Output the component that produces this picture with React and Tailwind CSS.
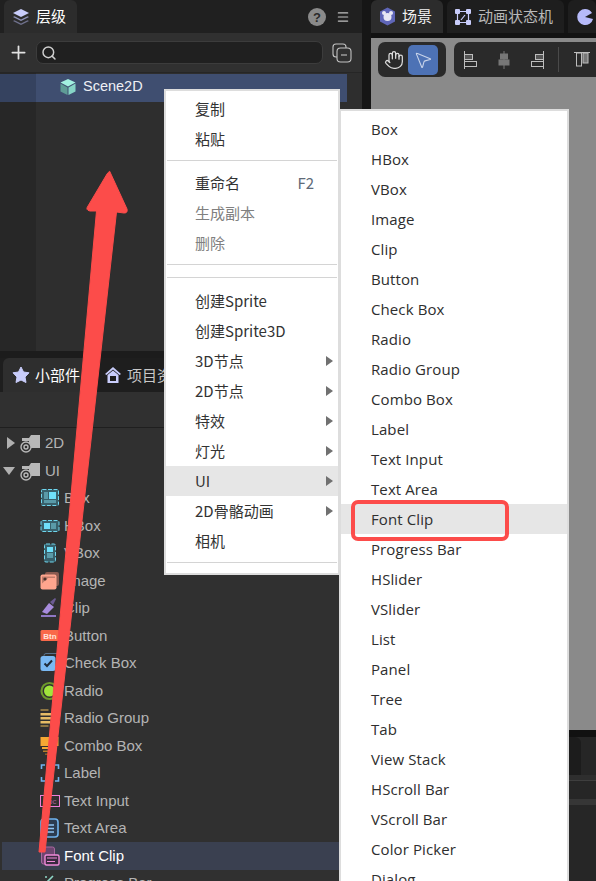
import { Plus, Search, Menu, Hand, MousePointer2 } from 'lucide-react';

const mainMenu = [
  { label: '复制' },
  { label: '粘贴' },
  { sep: true },
  { label: '重命名', hint: 'F2' },
  { label: '生成副本', disabled: true },
  { label: '删除', disabled: true },
  { sep: true },
  { sep: true, tight: true },
  { label: '创建Sprite' },
  { label: '创建Sprite3D' },
  { label: '3D节点', arrow: true },
  { label: '2D节点', arrow: true },
  { label: '特效', arrow: true },
  { label: '灯光', arrow: true },
  { label: 'UI', arrow: true, active: true },
  { label: '2D骨骼动画', arrow: true },
  { label: '相机' },
  { sep: true },
];

const subMenu = ['Box', 'HBox', 'VBox', 'Image', 'Clip', 'Button', 'Check Box', 'Radio', 'Radio Group', 'Combo Box', 'Label', 'Text Input', 'Text Area', 'Font Clip', 'Progress Bar', 'HSlider', 'VSlider', 'List', 'Panel', 'Tree', 'Tab', 'View Stack', 'HScroll Bar', 'VScroll Bar', 'Color Picker', 'Dialog'];

const widgets = ['Box', 'HBox', 'VBox', 'Image', 'Clip', 'Button', 'Check Box', 'Radio', 'Radio Group', 'Combo Box', 'Label', 'Text Input', 'Text Area', 'Font Clip', 'Progress Bar'];

function WidgetIcon({ name }) {
  return (
    <svg width="20" height="20" viewBox="0 0 20 20">
      {name === 'Box' && <g><rect x="1.500" y="1.500" width="17" height="16" rx="1" fill="#38606b" stroke="#6fd6ee" strokeDasharray="4 1.500" /><rect x="9" y="4" width="7" height="7" fill="#6fe0fa" /><rect x="4" y="4" width="4" height="7" fill="#5a9aa8" /><rect x="4" y="12" width="12" height="3" fill="#5a9aa8" /></g>}
      {name === 'HBox' && <g><rect x="1" y="4.500" width="18" height="11" rx="1.500" fill="#38606b" stroke="#6fd6ee" strokeDasharray="4 1.500" /><rect x="4" y="7" width="6" height="6" fill="#6fe0fa" /><rect x="11" y="7" width="5" height="6" fill="#5a9aa8" /></g>}
      {name === 'VBox' && <g><rect x="4.500" y="1" width="11" height="18" rx="1.500" fill="#38606b" stroke="#6fd6ee" strokeDasharray="4 1.500" /><rect x="7" y="4" width="6" height="5" fill="#6fe0fa" /><rect x="7" y="10" width="6" height="5" fill="#5a9aa8" /></g>}
      {name === 'Image' && <g><rect x="5" y="1" width="14" height="14" rx="2" fill="#8a5a50" /><rect x="0.500" y="3.500" width="16" height="15" rx="2" fill="#ffa58e" /><circle cx="5" cy="8" r="1.600" fill="#4a332e" /><path d="M2 12.500 L8 7 H15 V5.500 H2Z" fill="#4a332e" opacity="0.35" /></g>}
      {name === 'Clip' && <g><path d="M2 14 L9 5 L14 9 L7 16Z" fill="#a78bdc" /><path d="M10 4 L15 0 L16 1 L13 7Z" fill="#6b5a92" /><rect x="1" y="17" width="15" height="2" fill="#8f78c4" /></g>}
      {name === 'Button' && <g><rect x="0.500" y="4" width="19" height="11" rx="1.500" fill="#f9694a" /><text x="10" y="12.500" fontSize="8" fontWeight="700" textAnchor="middle" fill="#ffe4dc" fontFamily="Liberation Sans">Btn</text></g>}
      {name === 'Check Box' && <g><rect x="4" y="0.500" width="15" height="13" rx="2" fill="none" stroke="#58728c" /><rect x="0.500" y="3" width="15" height="15" rx="2.500" fill="#7ab9f3" /><path d="M4.500 10.500 L7 13 L12 7.500" fill="none" stroke="#1f2c3a" strokeWidth="2" /></g>}
      {name === 'Radio' && <g><circle cx="9.500" cy="10" r="8" fill="none" stroke="#6d9a2c" strokeWidth="2.200" /><circle cx="9.500" cy="10" r="5.500" fill="#a0e53c" /></g>}
      {name === 'Radio Group' && <g fill="#e8bd66"><rect x="0.500" y="1" width="8" height="2" fill="#8c7442" /><rect x="0.500" y="5" width="13" height="2.500" /><rect x="0.500" y="9" width="13" height="2.500" /><rect x="0.500" y="13" width="10" height="2.500" /><rect x="0.500" y="17" width="8" height="2" fill="#8c7442" /></g>}
      {name === 'Combo Box' && <g><rect x="0.500" y="1" width="18" height="9" fill="#f5a833" /><rect x="2" y="11" width="15" height="2" fill="#f5a833" /><rect x="3" y="14.500" width="13" height="1.500" fill="#b87f2a" /><rect x="5" y="17.500" width="9" height="1.500" fill="#8a6424" /></g>}
      {name === 'Label' && <path d="M5 2 H1.500 V6 M15 2 H18.500 V6 M1.500 14 V18 H5 M18.500 14 V18 H15" fill="none" stroke="#6fb3ef" strokeWidth="1.600" />}
      {name === 'Text Input' && <g><rect x="0.500" y="4.500" width="19" height="11" fill="none" stroke="#ef7fd6" strokeWidth="1" /><text x="10" y="13" fontSize="8" textAnchor="middle" fill="#a85c98" fontFamily="Liberation Sans">abc</text></g>}
      {name === 'Text Area' && <g><rect x="1" y="1" width="17" height="18" rx="3" fill="#2c3c50" stroke="#6fb3ef" strokeWidth="1.600" /><path d="M5 7 H14 M5 10.500 H14 M5 14 H14" stroke="#8fc3f2" strokeWidth="1.500" /></g>}
      {name === 'Font Clip' && <g><rect x="1.500" y="1" width="13" height="17" rx="2" fill="#6e4570" stroke="#a868a0" /><rect x="5" y="9" width="14" height="10" rx="1.500" fill="#3a2a40" stroke="#f08ad8" strokeWidth="1.400" /><path d="M7 12 H17 M7 15.500 H15" stroke="#f08ad8" strokeWidth="1.200" /></g>}
      {name === 'Progress Bar' && <path d="M4 12 L13 3 M5 4 h2 M11 11 h2" stroke="#8fd8c8" strokeWidth="1.600" fill="none" />}
    </svg>
  );
}

function FolderIcon() {
  return (
    <svg width="22" height="20" viewBox="0 0 22 20">
      <path d="M2 5 H9 L11 2 H20 V15 H9 V8 H2Z" fill="#b8b8b8" />
      <circle cx="6" cy="14" r="5" fill="#303030" stroke="#b8b8b8" strokeWidth="1.400" />
      <circle cx="6" cy="14" r="2" fill="none" stroke="#b8b8b8" strokeWidth="1.400" />
    </svg>
  );
}

function LayersIcon() {
  return (
    <svg width="18" height="18" viewBox="0 0 18 18">
      <path d="M9 1 L17 5 L9 9 L1 5Z" fill="#c9cdfb" />
      <path d="M2.500 8.200 L9 11.500 L15.500 8.200 L17 9 L9 13 L1 9Z" fill="#8f92b8" />
      <path d="M2.500 12.200 L9 15.500 L15.500 12.200 L17 13 L9 17 L1 13Z" fill="#70728e" />
    </svg>
  );
}

function AlignIcon({ kind }) {
  return (
    <svg width="16" height="20" viewBox="0 0 16 20" fill="none" stroke="#bdbdbd" strokeWidth="1">
      {kind === 'left' && <g><path d="M1.500 1 V19" /><rect x="1.500" y="4.500" width="8" height="5" fill="#555" /><rect x="1.500" y="11.500" width="12" height="5" /></g>}
      {kind === 'center' && <g><path d="M8 1 V19" stroke="#777" /><rect x="4.500" y="4" width="7" height="5" fill="#777" stroke="#777" /><rect x="3" y="10" width="10" height="5" fill="#777" stroke="#777" /></g>}
      {kind === 'right' && <g><path d="M14.500 1 V19" /><rect x="6.500" y="4.500" width="8" height="5" fill="#555" /><rect x="2.500" y="11.500" width="12" height="5" /></g>}
      {kind === 'top' && <g><path d="M0 2.500 H16" /><rect x="2.500" y="3" width="5" height="13" /><rect x="9" y="3" width="5" height="10" fill="#777" /></g>}
    </svg>
  );
}

function ContextMenu() {
  return (
    <div className="absolute left-[164px] top-[89px] w-[176px] h-[486px] bg-white border-2 border-[#dddddd] pt-[3px] text-[15px] text-[#333333]">
      {mainMenu.map((item, i) => {
        if (item.sep) return <div key={i} className={item.tight ? 'mt-[12px] mb-[8px] mx-[1px] h-[1px] bg-[#d4d4d4]' : 'mt-[6px] mb-[7px] mx-[1px] h-[1px] bg-[#d4d4d4]'} />;
        return (
          <div key={i} className={`h-[30px] flex items-center pl-[29px] pr-[5px] ${item.active ? 'bg-[#e6e6e6]' : ''} ${item.disabled ? 'text-[#808080]' : ''}`}>
            <span className="flex-1">{item.label}</span>
            {item.hint && <span className="text-[#606a78] mr-[19px]">{item.hint}</span>}
            {item.arrow && <span className="w-0 h-0 border-y-[5px] border-y-transparent border-l-[7px] border-l-[#707070]" />}
          </div>
        );
      })}
    </div>
  );
}

function SubMenu() {
  return (
    <div className="absolute left-[339px] top-[109px] w-[230px] h-[790px] bg-white border-2 border-[#dddddd] pt-[3px] text-[15px] tracking-[0.1px] text-[#2e2e2e] font-['Open_Sans','Noto_Sans_CJK_SC',sans-serif] overflow-hidden">
      {subMenu.map((label) => (
        <div key={label} className={`h-[30px] flex items-center pl-[30px] ${label === 'Font Clip' ? 'bg-[#e6e6e6]' : ''}`}>
          {label}
        </div>
      ))}
      <div className="absolute left-[10px] top-[389px] w-[158px] h-[41px] border-4 border-[#fc4c4a] rounded-[7px]" />
    </div>
  );
}

export default function App() {
  return (
    <div className="relative w-[596px] h-[881px] overflow-hidden flex bg-[#171717] font-['Noto_Sans_CJK_SC','Liberation_Sans',sans-serif]">
      <div className="w-[362px] h-full flex flex-col shrink-0">
        {/* hierarchy panel */}
        <div className="h-[351px] flex flex-col bg-[#2e2e2e]">
          <div className="h-[33px] bg-[#202020] flex items-end pl-[4px] pr-[12px]">
            <div className="h-[33px] w-[73px] bg-[#2c2c2c] rounded-t-[6px] flex items-center pl-[8px] gap-[6px] text-white text-[15px]">
              <LayersIcon />
              <span>层级</span>
            </div>
            <div className="flex-1 h-full flex items-center justify-end gap-[10px]">
              <svg width="18" height="18" viewBox="0 0 18 18">
                <circle cx="9" cy="9" r="9" fill="#8a8a8a" />
                <text x="9" y="13.500" fontSize="13" fontWeight="700" textAnchor="middle" fill="#2a2a2a" fontFamily="Liberation Sans">?</text>
              </svg>
              <Menu size={14} color="#c0c0c0" />
            </div>
          </div>
          <div className="h-[39px] bg-[#303030] flex items-center pl-[8px] pr-[10px]">
            <Plus size={21} color="#e2e2e2" strokeWidth={2} />
            <div className="ml-[7px] w-[287px] h-[23px] rounded-[7px] bg-[#202020] border border-[#3c3c3c] flex items-center pl-[4px]">
              <Search size={16} color="#d0d0d0" strokeWidth={2.2} />
            </div>
            <svg className="ml-[9px]" width="20" height="20" viewBox="0 0 20 20" fill="none" stroke="#c4c4c4" strokeWidth="1.100">
              <rect x="1" y="1" width="13" height="13" rx="3" />
              <rect x="5" y="5" width="14" height="14" rx="3.500" fill="#303030" />
              <path d="M9 12 H15" />
            </svg>
          </div>
          <div className="flex-1 bg-[#2e2e2e] pt-[1px] border-t border-[#262626] relative">
            <div className="h-[28px] w-[347px] bg-[#3f4e70] flex items-center pl-[59px] pb-[2px] gap-[6px] text-[14.5px] text-[#eef0f5] font-['Liberation_Sans',sans-serif]">
              <svg width="18" height="18" viewBox="0 0 18 18">
                <path d="M9 1 L16.500 4.500 L9 8.500 L1.500 4.500Z" fill="#a2f0e0" />
                <path d="M1.500 5.500 L8.500 9.500 V17 L1.500 13.500Z" fill="#5f9c96" />
                <path d="M16.500 5.500 L9.500 9.500 V17 L16.500 13.500Z" fill="#86d4c6" />
              </svg>
              <span>Scene2D</span>
            </div>
            <div className="absolute inset-y-0 left-0 w-[36px] bg-black/15" />
          </div>
        </div>
        <div className="h-[7px] bg-[#1c1c1c]" />
        {/* widgets panel */}
        <div className="flex-1 min-h-0 flex flex-col bg-[#303030] overflow-hidden">
          <div className="h-[34px] bg-[#1e1e1e] flex items-end pl-[3px] shrink-0">
            <div className="h-[34px] w-[85px] bg-[#2e2e2e] rounded-t-[6px] flex items-center pl-[9px] gap-[5px] text-white text-[15px]">
              <svg width="18" height="18" viewBox="0 0 18 18">
                <path d="M9 1 L11.500 6 L17 6.800 L13 11 L14 16.500 L9 14 L4 16.500 L5 11 L1 6.800 L6.500 6Z" fill="#c9cdfb" stroke="#c9cdfb" strokeLinejoin="round" />
              </svg>
              <span>小部件</span>
            </div>
            <div className="h-[34px] flex items-center pl-[16px] gap-[5px] text-[#c8c8c8] text-[15px]">
              <svg width="18" height="18" viewBox="0 0 18 18" fill="#c9cdfb">
                <path d="M9 1 L17 8 L15.500 9 L9 3.500 L2.500 9 L1 8Z" />
                <path d="M3.500 9 L9 4.500 L14.500 9 V17 H3.500Z" />
                <rect x="6" y="10" width="6" height="5" fill="#1e1e1e" />
              </svg>
              <span>项目资源</span>
            </div>
          </div>
          <div className="h-[36px] shrink-0 border-b border-[#1f1f1f]" />
          <div className="pt-[1.5px] text-[15px] text-[#b4b4b4] font-['Liberation_Sans',sans-serif]">
            <div className="h-[27.5px] flex items-center pl-[7px]">
              <span className="w-0 h-0 border-y-[6px] border-y-transparent border-l-[8px] border-l-[#b0b0b0]" />
              <span className="ml-[5px]"><FolderIcon /></span>
              <span className="ml-[3px]">2D</span>
            </div>
            <div className="h-[27.5px] flex items-center pl-[3px]">
              <span className="w-0 h-0 border-x-[6px] border-x-transparent border-t-[8px] border-t-[#b0b0b0]" />
              <span className="ml-[5px]"><FolderIcon /></span>
              <span className="ml-[3px]">UI</span>
            </div>
            {widgets.map((name) => (
              <div key={name} className={`h-[27.5px] flex items-center ${name === 'Font Clip' ? 'bg-[#3a4050] text-white ml-[2px] pl-[38px]' : 'pl-[40px]'}`}>
                <WidgetIcon name={name} />
                <span className="ml-[4px]">{name}</span>
              </div>
            ))}
          </div>
        </div>
      </div>

      <div className="w-[9px] h-full bg-[#161616] shrink-0" />

      {/* scene side */}
      <div className="flex-1 h-full flex flex-col min-w-0">
        <div className="h-[33px] bg-[#141414] flex gap-[4px] shrink-0 overflow-hidden">
          <div className="w-[72px] bg-[#2c2c2c] rounded-t-[6px] flex items-center pl-[8px] gap-[6px] text-[#f0f0f0] text-[15px] shrink-0">
            <svg width="17" height="19" viewBox="0 0 17 19">
              <path d="M8.500 0.500 L16 4.500 V14.500 L8.500 18.500 L1 14.500 V4.500Z" fill="#5f66b8" />
              <circle cx="8.500" cy="10" r="4" fill="#e8e8f4" />
              <circle cx="5" cy="6" r="2" fill="#e8e8f4" />
              <circle cx="12" cy="6" r="2" fill="#e8e8f4" />
            </svg>
            <span>场景</span>
          </div>
          <div className="w-[117px] bg-[#1e1e1e] rounded-t-[6px] flex items-center pl-[7px] gap-[6px] text-[#b8b8b8] text-[15px] shrink-0">
            <svg width="18" height="18" viewBox="0 0 18 18" fill="#c9cdfb">
              <rect x="1" y="1" width="5" height="5" rx="1" />
              <rect x="12" y="1" width="5" height="5" rx="1" />
              <rect x="1" y="12" width="5" height="5" rx="1" />
              <rect x="12" y="12" width="5" height="5" rx="1" />
              <path d="M6 3.500 H12 M6 14.500 H12 M3.500 6 V12 M14.500 6 V12 M7 12 L11 7" stroke="#c9cdfb" strokeWidth="1.200" fill="none" />
            </svg>
            <span className="whitespace-nowrap">动画状态机</span>
          </div>
          <div className="flex-1 bg-[#1e1e1e] rounded-t-[6px] flex items-center pl-[8px] shrink-0 w-[40px]">
            <svg width="18" height="18" viewBox="0 0 18 18">
              <path d="M9 1 A8 8 0 1 0 17 11 L9 9 L16 5 A8 8 0 0 0 9 1Z" fill="#b6bafa" />
            </svg>
          </div>
        </div>
        <div className="h-[5px] bg-[#121212] shrink-0" />
        <div className="h-[692px] bg-[#8a8a8a] shrink-0 relative pt-[4px] pl-[7px]">
          <div className="flex gap-[8px]">
            <div className="h-[35px] w-[68px] rounded-[7px] bg-[#2a2a2a] flex items-center pl-[6px] gap-[4px]">
              <Hand size={20} color="#dcdcdc" strokeWidth={1.5} />
              <div className="w-[30px] h-[30px] rounded-[5px] bg-[#4d72b5] flex items-center justify-center">
                <MousePointer2 size={20} color="#c8d4ea" strokeWidth={1.300} />
              </div>
            </div>
            <div className="h-[35px] flex-1 rounded-l-[7px] bg-[#2a2a2a] flex items-center pl-[9px]">
              <div className="flex items-center gap-[17px]">
                <AlignIcon kind="left" />
                <AlignIcon kind="center" />
                <AlignIcon kind="right" />
              </div>
              <div className="ml-[13px] w-[1px] h-[25px] bg-[#4a4a4a]" />
              <div className="ml-[15px]">
                <AlignIcon kind="top" />
              </div>
            </div>
          </div>
        </div>
        <div className="h-[7px] bg-[#111111] shrink-0" />
        <div className="flex-1 bg-[#262626] flex flex-col">
          <div className="h-[38px] ml-[160px] w-[50px] bg-[#1c1c1c] rounded-tr-[6px]" />
          <div className="h-[6px] bg-[#2e2e2e] border-b border-[#3e3e3e]" />
          <div className="h-[18px]" />
          <div className="h-[6px] bg-[#363636]" />
        </div>
      </div>

      <ContextMenu />
      <SubMenu />

      <svg className="absolute left-0 top-0 pointer-events-none" width="596" height="881" viewBox="0 0 596 881">
        <path d="M110 172 L127 209 Q128 213 124 213 L116.500 212 L45 852 L39 852 L96.500 211 L90 211 Q85 210 88 206 L107 174 Q110 170 110 172Z" fill="#fc4c4a" stroke="#fc4c4a" strokeLinejoin="round" />
      </svg>
    </div>
  );
}
